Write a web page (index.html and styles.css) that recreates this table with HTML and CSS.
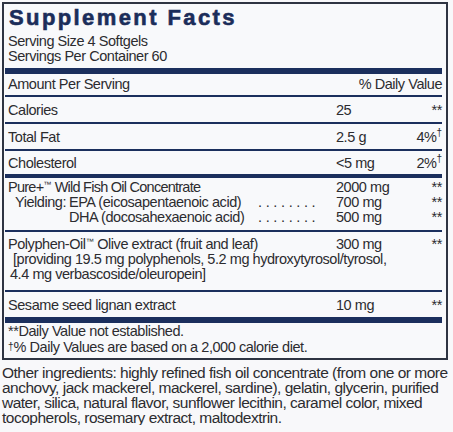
FILE: index.html
```html
<!DOCTYPE html>
<html>
<head>
<meta charset="utf-8">
<link rel="stylesheet" href="styles.css">
</head>
<body>
<div class="facts">
  <h1 class="title">Supplement Facts</h1>
  <div class="serving">
    <div>Serving Size 4 Softgels</div>
    <div>Servings Per Container 60</div>
  </div>
  <div class="bar thick"></div>
  <div class="row head">
    <span class="name">Amount Per Serving</span>
    <span class="dvh">% Daily Value</span>
  </div>
  <div class="bar thin"></div>
  <div class="row top">
    <span class="name">Calories</span><span class="amt">25</span><span class="dv">**</span>
  </div>
  <div class="bar thin"></div>
  <div class="row top">
    <span class="name">Total Fat</span><span class="amt">2.5 g</span><span class="dv">4%<sup>†</sup></span>
  </div>
  <div class="bar thin"></div>
  <div class="row chol">
    <span class="name">Cholesterol</span><span class="amt">&lt;5 mg</span><span class="dv">2%<sup>†</sup></span>
  </div>
  <div class="bar mid"></div>
  <div class="group fish">
    <div class="row line">
      <span class="name tight">Pure+<sup class="tm">™</sup> Wild Fish Oil Concentrate</span><span class="amt">2000 mg</span><span class="dv">**</span>
    </div>
    <div class="row line">
      <span class="name sub"><span class="yl">Yielding:</span>EPA (eicosapentaenoic acid)</span><span class="dots">. . . . . . . .</span><span class="amt">700 mg</span><span class="dv">**</span>
    </div>
    <div class="row line">
      <span class="name sub"><span class="yl"></span>DHA (docosahexaenoic acid)</span><span class="dots">. . . . . . . .</span><span class="amt">500 mg</span><span class="dv">**</span>
    </div>
  </div>
  <div class="bar thin"></div>
  <div class="group olive">
    <div class="row line">
      <span class="name">Polyphen-Oil<sup class="tm">™</sup> Olive extract (fruit and leaf)</span><span class="amt">300 mg</span><span class="dv">**</span>
    </div>
    <div class="note"><span class="ind">[providing 19.5 mg polyphenols, 5.2 mg hydroxytyrosol/tyrosol,</span><br>4.4 mg verbascoside/oleuropein]</div>
  </div>
  <div class="bar thin"></div>
  <div class="row top">
    <span class="name">Sesame seed lignan extract</span><span class="amt">10 mg</span><span class="dv">**</span>
  </div>
  <div class="bar thick"></div>
  <div class="foot">
    <div>**Daily Value not established.</div>
    <div><span class="dag">†</span>% Daily Values are based on a 2,000 calorie diet.</div>
  </div>
</div>
<p class="other">Other ingredients: highly refined fish oil concentrate (from one or more anchovy, jack mackerel, mackerel, sardine), gelatin, glycerin, purified water, silica, natural flavor, sunflower lecithin, caramel color, mixed tocopherols, rosemary extract, maltodextrin.</p>
</body>
</html>
```
FILE: styles.css
```css
html, body {
  margin: 0;
  padding: 0;
  background: #f8f8fa;
}
body {
  font-family: "Liberation Sans", Arial, sans-serif;
  color: #2c2c30;
  font-size: 14.5px;
  line-height: 15px;
  letter-spacing: -0.45px;
  width: 453px;
}
.facts {
  margin: 2px 5px 0 2px;
  border: 2px solid #2e3442;
  padding: 0 4px 0 1px;
  background: #f8f9fb;
}
.title {
  margin: 0;
  padding: 2px 0 0 4px;
  font-size: 22px;
  line-height: 24px;
  font-weight: bold;
  letter-spacing: 2.4px;
  color: #1b2d5a;
  -webkit-text-stroke: 0.6px #1b2d5a;
}
.serving {
  padding: 4px 0 4px 3px;
}
.bar { background: #1b2f5d; }
.bar.thick { height: 6px; }
.bar.mid { height: 4px; }
.bar.thin { height: 2px; }
.row {
  display: grid;
  grid-template-columns: 250px 78px 70px 1fr;
  padding: 5px 0 5px 3px;
}
.row.top { padding: 6px 0 4px 3px; }
.row.chol { padding: 5px 0 3px 3px; }
.row.head {
  display: flex;
  justify-content: space-between;
  padding: 3px 0 3px 3px;
}
.group.fish { padding: 2px 0 5px 0; }
.group.olive { padding: 5px 0 8px 0; }
.group .row.line { padding: 0 0 0 3px; }
.name { grid-column: 1 / 3; white-space: nowrap; }
.name.tight { letter-spacing: -0.75px; }
.name.sub { grid-column: 1; padding-left: 7px; }
.yl { display: inline-block; width: 54px; }
.dots { grid-column: 2; letter-spacing: -0.2px; }
.amt { grid-column: 3; }
.dv { grid-column: 4; text-align: right; }
.dvh { text-align: right; }
sup {
  font-size: 10px;
  line-height: 0;
  vertical-align: 6px;
  letter-spacing: 0;
}
.tm { font-size: 8px; vertical-align: 5px; }
.note { padding-left: 5px; white-space: nowrap; }
.ind { padding-left: 3px; }
.foot { padding: 1px 0 3px 3px; }
.dag { font-size: 10px; vertical-align: 2px; letter-spacing: 0; }
.other {
  margin: 5px 0 0 2px;
  width: 448px;
  font-size: 15.5px;
  line-height: 15px;
  letter-spacing: -0.5px;
}
```
